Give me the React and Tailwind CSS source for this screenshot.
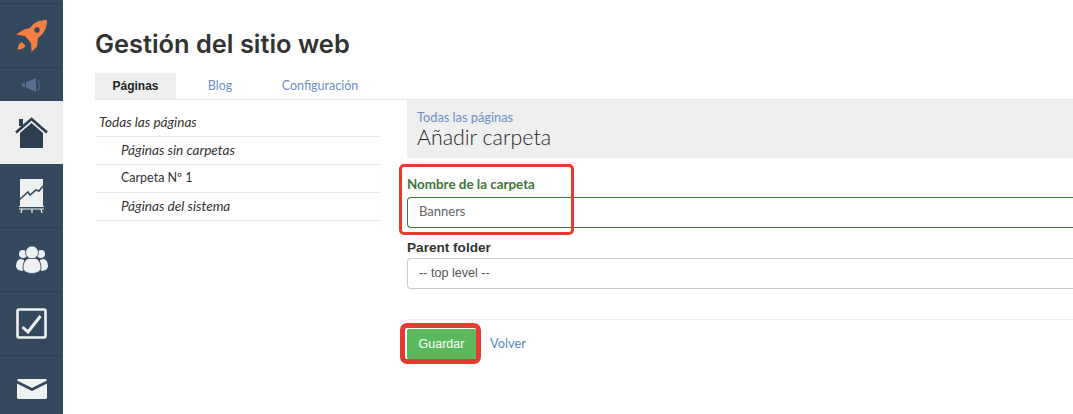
const Rocket = () => (
  <svg width="32" height="34" viewBox="0 0 32 34">
    <path fill="#f47f45" d="M31 1C24 1 18 3 14 9L8 10.500 0 15.500 9 17l6 7 .500 9 5.500-5.500 1-8.500C28 14.500 31 9 31 1z" />
    <circle cx="21" cy="11" r="2.700" fill="#34495e" />
    <path fill="#f47f45" d="M6 23c-2 .500-4 3-4.500 7.500 3.500 0 6.500-1 8-3.500z" />
  </svg>
)

const Megaphone = () => (
  <svg width="20" height="14" viewBox="0 0 20 14" fill="#566f8b">
    <rect x="0" y="5" width="3" height="4" />
    <path d="M4 4.500 14 0v14L4 9.500z" />
    <path d="M16 2c2 2.500 2 7.500 0 10" fill="none" stroke="#566f8b" strokeWidth="1" />
  </svg>
)

const Home = () => (
  <svg width="33" height="31" viewBox="0 0 33 31">
    <rect x="4" y="2" width="4" height="7" fill="#2c3e50" />
    <path d="M1 15.500 16.500 2 32 15.500" fill="none" stroke="#2c3e50" strokeWidth="2.600" />
    <path fill="#2c3e50" d="M16.500 6 28 16v15H5V16z" />
  </svg>
)

const Chart = () => (
  <svg width="26" height="34" viewBox="0 0 26 34">
    <rect x="1" y="0" width="23" height="28" fill="#eef1f2" />
    <path d="M0 21 9 13l2 3 6-5 3 1 4-5" fill="none" stroke="#34495e" strokeWidth="1.600" />
    <path d="M0 27.500h25M0 30h25M3 30l-1 4M13 30v4M22 30l1 4" fill="none" stroke="#eef1f2" strokeWidth="1.200" />
  </svg>
)

const Users = () => (
  <svg width="32" height="28" viewBox="0 0 32 28" fill="#eef1f2">
    <circle cx="7" cy="8" r="4" />
    <circle cx="25" cy="8" r="4" />
    <path d="M0 21c0-5 2-8 5-8l3 1-1 11-5-1z" />
    <path d="M32 21c0-5-2-8-5-8l-3 1 1 11 5-1z" />
    <circle cx="16" cy="6.500" r="6.500" stroke="#34495e" strokeWidth=".8" />
    <path d="M7 22c0-6 3-9 5.500-9.500h7C22 13 25 16 25 22c0 3-4 5.500-9 5.500S7 25 7 22z" stroke="#34495e" strokeWidth=".8" />
  </svg>
)

const Check = () => (
  <svg width="31" height="31" viewBox="0 0 31 31">
    <rect x="1.500" y="1.500" width="28" height="28" rx="1.500" fill="none" stroke="#eef1f2" strokeWidth="2.600" />
    <path d="M6.500 19 12 24 24.500 8" fill="none" stroke="#eef1f2" strokeWidth="3" />
  </svg>
)

const Mail = () => (
  <svg width="30" height="20" viewBox="0 0 30 20" fill="#eef1f2">
    <path d="M0 1.500 1 0h28l1 1.500L15 9z" />
    <path d="M0 4.500 15 12 30 4.500V19l-1 1H1l-1-1z" />
  </svg>
)

const NavItem = ({ active, className, children }) => (
  <div className={`flex items-center justify-center border-b border-[#2c3e50] ${active ? 'bg-[#efefef]' : ''} ${className}`}>
    {children}
  </div>
)

const folders = [
  { label: 'Todas las páginas', style: 'pl-[4px] text-[13.6px] italic' },
  { label: 'Páginas sin carpetas', style: 'pl-[26px] text-[13.6px] italic' },
  { label: 'Carpeta Nº 1', style: 'pl-[26px] text-[12.5px]' },
  { label: 'Páginas del sistema', style: 'pl-[26px] text-[13.6px] italic' },
]

export default function App() {
  return (
    <div className="flex h-[414px] w-[1073px] overflow-hidden bg-white font-['Lato',sans-serif]">
      <aside className="flex w-[63px] shrink-0 flex-col bg-[#34495e]">
        <div className="h-[4px] border-b border-[#2c3e50]" />
        <NavItem className="h-[64px]"><Rocket /></NavItem>
        <NavItem className="h-[33px] border-b-0"><Megaphone /></NavItem>
        <NavItem active className="h-[63px] border-b-0"><Home /></NavItem>
        <NavItem className="h-[64px]"><Chart /></NavItem>
        <NavItem className="h-[64px]"><Users /></NavItem>
        <NavItem className="h-[64px]"><Check /></NavItem>
        <NavItem className="h-[58px] border-b-0 pt-[7px]"><Mail /></NavItem>
      </aside>

      <main className="relative min-w-0 flex-1 pl-[32px] pt-[27px]">
        <h1 className="h-[46px] font-['Inter',sans-serif] text-[25.4px] leading-[34px] font-semibold text-[#333333]">
          Gestión del sitio web
        </h1>

        <div className="flex h-[27px] border-b border-[#e8e8e8] text-[12.5px]">
          <div className="flex w-[81px] items-center justify-center bg-[#efefef] font-['Liberation_Sans',sans-serif] text-[12px] font-bold text-[#222222]">
            Páginas
          </div>
          <div className="flex w-[88px] items-center justify-center text-[#6d8fc4]">Blog</div>
          <div className="flex w-[112px] items-center justify-center text-[#6d8fc4]">Configuración</div>
        </div>

        <div className="flex">
          <ul className="mt-[9px] w-[285px] text-[#333333]">
            {folders.map((f) => (
              <li key={f.label} className={`flex h-[28px] items-center border-b border-[#e8e8e8] ${f.style}`}>
                {f.label}
              </li>
            ))}
          </ul>

          <section className="ml-[27px] min-w-0 flex-1">
            <div className="h-[58px] bg-[#efefef] pl-[10px] pt-[9px]">
              <div className="text-[12.8px] leading-[16px] text-[#6d8fc4]">Todas las páginas</div>
              <div className="text-[21.4px] leading-[25px] font-light text-[#1f1f1f]">Añadir carpeta</div>
            </div>

            <label className="mt-[18px] block text-[13.4px] leading-[16px] font-bold text-[#3c763d]">
              Nombre de la carpeta
            </label>
            <div className="mt-[5px] flex h-[31px] items-center rounded-l-[4px] border border-r-0 border-[#3c763d] pb-[2px] pl-[11px] text-[13px] text-[#666666]">
              Banners
            </div>

            <label className="mt-[12px] block font-['Liberation_Sans',sans-serif] text-[13.6px] leading-[16px] font-bold text-[#333333]">
              Parent folder
            </label>
            <div className="mt-[2px] flex h-[31px] items-center rounded-l-[4px] border border-r-0 border-[#cccccc] pl-[11px] font-['Liberation_Sans',sans-serif] text-[12.6px] text-[#555555]">
              -- top level --
            </div>

            <div className="mt-[30px] flex items-center border-t border-[#eeeeee] pt-[9px]">
              <button className="h-[30px] w-[69px] rounded-[2px] bg-[#5cb85c] font-['Liberation_Sans',sans-serif] text-[12.5px] text-white">
                Guardar
              </button>
              <a className="ml-[14px] text-[12.8px] text-[#5a87c0]">Volver</a>
            </div>
          </section>
        </div>

        {/* red highlights drawn over the screenshot */}
        <div className="absolute top-[164px] left-[336px] h-[71px] w-[175px] rounded-[5px] border-[3.5px] border-[#e53b30]" />
        <div className="absolute top-[323px] left-[337px] h-[41px] w-[81px] rounded-[7px] border-[5px] border-[#e53b30]" />
      </main>
    </div>
  )
}
